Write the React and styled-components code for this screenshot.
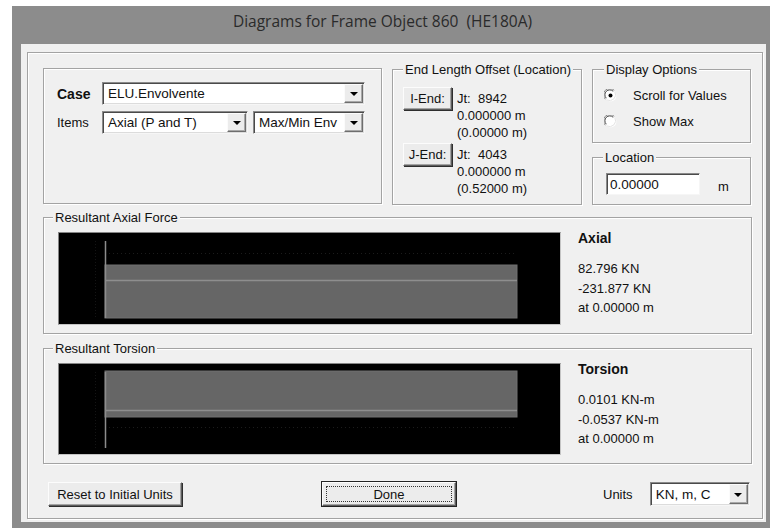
import React from "react";
import styled, { createGlobalStyle } from "styled-components";

const GlobalStyle = createGlobalStyle`
  html, body {
    margin: 0;
    padding: 0;
    background: #ffffff;
  }
  body {
    font-family: "Liberation Sans", Arial, sans-serif;
    font-size: 13px;
    color: #111;
  }
`;

const Screen = styled.div`
  width: 770px;
  height: 528px;
  overflow: hidden;
  padding: 6px 0 0 12px;
  box-sizing: border-box;
`;

// Window chrome: caption bar plus thick grey frame
const Window = styled.div`
  width: 758px;
  height: 522px;
  box-sizing: border-box;
  background: #8c8c8c;
  padding: 0 4px 6px 9px;
  display: flex;
  flex-direction: column;
`;

const TitleBar = styled.div`
  height: 38px;
  display: flex;
  align-items: center;
  justify-content: center;
  padding: 0 22px 8px 0;
  box-sizing: border-box;
  font-family: "Open Sans", "Noto Sans", sans-serif;
  font-size: 15.5px;
  color: #2a2a2a;
  white-space: pre;
`;

const Client = styled.div`
  flex: 1;
  display: flex;
  background: #f0f0f0;
  padding: 8px 3px 3px 6px;
  box-sizing: border-box;
`;

const Frame = styled.div`
  flex: 1;
  display: flex;
  flex-direction: column;
  border: 1px solid #a3a3a3;
  box-shadow: inset 1px 1px 0 #fff, 1px 1px 0 #fff;
  padding: 15px 0 0 15px;
`;

const TopRow = styled.div`
  display: flex;
  align-items: flex-start;
  gap: 10px;
  height: 137px;
`;

const SideColumn = styled.div`
  display: flex;
  flex-direction: column;
  gap: 14px;
  margin-top: 1px;
`;

// Etched group box; the caption sits over the top edge
const Group = styled.div`
  box-sizing: border-box;
  width: ${(p) => p.$w}px;
  height: ${(p) => p.$h}px;
  margin-top: ${(p) => p.$top || 0}px;
  border: 1px solid #a3a3a3;
  box-shadow: inset 1px 1px 0 #fff, 1px 1px 0 #fff;
  padding: 0 0 0 ${(p) => p.$pl || 0}px;
`;

const Caption = styled.div`
  width: max-content;
  margin: -8px 0 0 ${(p) => p.$ml ?? 9}px;
  padding: 0 2px;
  line-height: 16px;
  background: #f0f0f0;
`;

const FieldRow = styled.div`
  display: flex;
  align-items: center;
  gap: 5px;
  margin-top: ${(p) => p.$mt || 0}px;
`;

const Label = styled.div`
  width: 40px;
  font-weight: ${(p) => (p.$bold ? 700 : 400)};
  font-size: ${(p) => (p.$bold ? 14 : 13)}px;
`;

const Combo = styled.div`
  box-sizing: border-box;
  width: ${(p) => p.$w}px;
  height: ${(p) => p.$h || 23}px;
  display: flex;
  align-items: stretch;
  background: #fff;
  border: 1px solid;
  border-color: #8a8a8a #f6f6f6 #f6f6f6 #8a8a8a;
  box-shadow: inset 1px 1px 0 #4a4a4a, inset -1px -1px 0 #dcdcdc;
  padding: 1px;
`;

const ComboText = styled.div`
  flex: 1;
  display: flex;
  align-items: center;
  padding-left: 4px;
  font-size: 13.5px;
  white-space: nowrap;
  overflow: hidden;
`;

const ComboArrow = styled.div`
  width: 17px;
  display: flex;
  align-items: center;
  justify-content: center;
  background: #ececec;
  border: 1px solid;
  border-color: #fbfbfb #6e6e6e #6e6e6e #fbfbfb;
  box-shadow: inset -1px -1px 0 #a8a8a8;

  &::after {
    content: "";
    border-left: 4px solid transparent;
    border-right: 4px solid transparent;
    border-top: 4px solid #000;
    margin-top: 1px;
  }
`;

const Button = styled.button`
  box-sizing: border-box;
  width: ${(p) => p.$w}px;
  height: ${(p) => p.$h || 24}px;
  padding: 0;
  font-family: "Liberation Sans", Arial, sans-serif;
  font-size: 13px;
  color: #111;
  background: #ececec;
  border: 1px solid;
  border-color: #fcfcfc #5c5c5c #5c5c5c #fcfcfc;
  box-shadow: inset -1px -1px 0 #a4a4a4, 1px 1px 0 #2e2e2e;
  display: flex;
  align-items: center;
  justify-content: center;
`;

const DefaultButton = styled(Button)`
  outline: 1px solid #222;
  box-shadow: inset -1px -1px 0 #a4a4a4;
  margin-left: ${(p) => p.$ml}px;

  & > span {
    flex: 1;
    align-self: stretch;
    margin: 3px;
    border: 1px dotted #333;
    display: flex;
    align-items: center;
    justify-content: center;
  }
`;

const EndBlock = styled.div`
  display: flex;
  align-items: flex-start;
  gap: 5px;
  margin-top: ${(p) => p.$mt || 0}px;
`;

const EndInfo = styled.div`
  margin-top: 3px;
  line-height: 17px;
  white-space: pre;
`;

const RadioRow = styled.div`
  display: flex;
  align-items: center;
  gap: 16px;
  height: 20px;
  margin-top: ${(p) => p.$mt || 0}px;
`;

const TextField = styled.div`
  box-sizing: border-box;
  width: 94px;
  height: 22px;
  background: #fff;
  border: 1px solid;
  border-color: #8a8a8a #f6f6f6 #f6f6f6 #8a8a8a;
  box-shadow: inset 1px 1px 0 #4a4a4a;
  padding: 1px 0 0 3px;
  display: flex;
  align-items: center;
  font-size: 13.5px;
`;

const Unit = styled.div`
  margin: 5px 0 0 13px;
`;

const ResultGroup = styled(Group)`
  margin-top: ${(p) => p.$top}px;
`;

const ResultBody = styled.div`
  display: flex;
  align-items: flex-start;
  gap: 17px;
  margin: 6px 0 0 14px;
`;

const Plot = styled.div`
  box-sizing: border-box;
  width: 503px;
  height: ${(p) => p.$h}px;
  background: #000;
  border: 1px solid;
  border-color: #858585 #c4c4c4 #c4c4c4 #858585;
  display: flex;
`;

const Readout = styled.div`
  margin-top: -2px;
`;

const ReadoutTitle = styled.div`
  font-weight: 700;
  font-size: 14px;
  line-height: 16px;
  margin-bottom: 13px;
`;

const ReadoutLine = styled.div`
  line-height: 19.5px;
  font-size: 13px;
`;

const BottomRow = styled.div`
  display: flex;
  align-items: center;
  margin-top: 18px;
  padding-left: 5px;
`;

const UnitsLabel = styled.div`
  margin: 0 17px 0 147px;
`;

function Radio({ checked }) {
  return (
    <svg width="13" height="13" viewBox="0 0 13 13">
      <circle cx="6.5" cy="6.5" r="6" fill="#fff" />
      <path d="M1.3 10.2 A6 6 0 0 1 10.2 1.3" stroke="#8a8a8a" strokeWidth="1" fill="none" />
      <path d="M2.3 9.2 A4.8 4.8 0 0 1 9.2 2.3" stroke="#444" strokeWidth="1" fill="none" />
      <path d="M10.8 2.6 A6 6 0 0 1 2.6 10.8" stroke="#e4e4e4" strokeWidth="1" fill="none" />
      {checked && <circle cx="6.5" cy="6.5" r="2" fill="#000" />}
    </svg>
  );
}

function Select({ w, h, value }) {
  return (
    <Combo $w={w} $h={h}>
      <ComboText>{value}</ComboText>
      <ComboArrow />
    </Combo>
  );
}

// Force diagram: stem at the I-end, filled band, mean line and dotted guides
function Diagram({ h, band, mean, guide }) {
  const inner = h - 2;
  return (
    <svg width="501" height={inner} viewBox={`0 0 501 ${inner}`}>
      <line x1="36.5" y1="8" x2="36.5" y2={inner - 6} stroke="#141414" strokeDasharray="1 2" />
      <line x1="50" y1={guide + 0.5} x2="455" y2={guide + 0.5} stroke="#1c1c1c" strokeDasharray="1 3" />
      <rect x="46" y={band[0]} width="412" height={band[1] - band[0]} fill="#666" stroke="#707070" strokeWidth="1" />
      <line x1="47" y1={mean + 0.5} x2="458" y2={mean + 0.5} stroke="#8e8e8e" strokeWidth="1.5" />
      <line x1="46.5" y1="8" x2="46.5" y2={inner - 6} stroke="#8c8c8c" strokeWidth="1.5" />
    </svg>
  );
}

function ResultPanel({ title, top, height, plotH, diagram, name, values }) {
  return (
    <ResultGroup $w={709} $h={height} $top={top}>
      <Caption>{title}</Caption>
      <ResultBody>
        <Plot $h={plotH}>
          <Diagram h={plotH} {...diagram} />
        </Plot>
        <Readout>
          <ReadoutTitle>{name}</ReadoutTitle>
          {values.map((v) => (
            <ReadoutLine key={v}>{v}</ReadoutLine>
          ))}
        </Readout>
      </ResultBody>
    </ResultGroup>
  );
}

export default function App() {
  return (
    <Screen>
      <GlobalStyle />
      <Window>
        <TitleBar>Diagrams for Frame Object 860  (HE180A)</TitleBar>
        <Client>
          <Frame>
            <TopRow>
              <Group $w={339} $h={136} $pl={13}>
                <FieldRow $mt={13}>
                  <Label $bold>Case</Label>
                  <Select w={263} value="ELU.Envolvente" />
                </FieldRow>
                <FieldRow $mt={6}>
                  <Label>Items</Label>
                  <Select w={146} value="Axial (P and T)" />
                  <Select w={112} value="Max/Min Env" />
                </FieldRow>
              </Group>

              <Group $w={190} $h={136} $top={1} $pl={10}>
                <Caption $ml={0}>End Length Offset (Location)</Caption>
                <EndBlock $mt={9}>
                  <Button $w={49} $h={23}>I-End:</Button>
                  <EndInfo>{"Jt:  8942\n0.000000 m\n(0.00000 m)"}</EndInfo>
                </EndBlock>
                <EndBlock $mt={2}>
                  <Button $w={49} $h={23}>J-End:</Button>
                  <EndInfo>{"Jt:  4043\n0.000000 m\n(0.52000 m)"}</EndInfo>
                </EndBlock>
              </Group>

              <SideColumn>
                <Group $w={159} $h={74} $pl={11}>
                  <Caption $ml={0}>Display Options</Caption>
                  <RadioRow $mt={7}>
                    <Radio checked />
                    <span>Scroll for Values</span>
                  </RadioRow>
                  <RadioRow $mt={6}>
                    <Radio />
                    <span>Show Max</span>
                  </RadioRow>
                </Group>
                <Group $w={159} $h={48} $pl={13}>
                  <Caption $ml={-3}>Location</Caption>
                  <FieldRow $mt={7}>
                    <TextField>0.00000</TextField>
                    <Unit>m</Unit>
                  </FieldRow>
                </Group>
              </SideColumn>
            </TopRow>

            <ResultPanel
              title="Resultant Axial Force"
              top={12}
              height={117}
              plotH={93}
              name="Axial"
              diagram={{ band: [32, 85], mean: 47, guide: 20 }}
              values={["82.796 KN", "-231.877 KN", "at 0.00000 m"]}
            />
            <ResultPanel
              title="Resultant Torsion"
              top={14}
              height={116}
              plotH={92}
              name="Torsion"
              diagram={{ band: [7, 53], mean: 46, guide: 63 }}
              values={["0.0101 KN-m", "-0.0537 KN-m", "at 0.00000 m"]}
            />

            <BottomRow>
              <Button $w={134}>Reset to Initial Units</Button>
              <DefaultButton $w={134} $ml={140}>
                <span>Done</span>
              </DefaultButton>
              <UnitsLabel>Units</UnitsLabel>
              <Select w={100} h={24} value="KN, m, C" />
            </BottomRow>
          </Frame>
        </Client>
      </Window>
    </Screen>
  );
}
